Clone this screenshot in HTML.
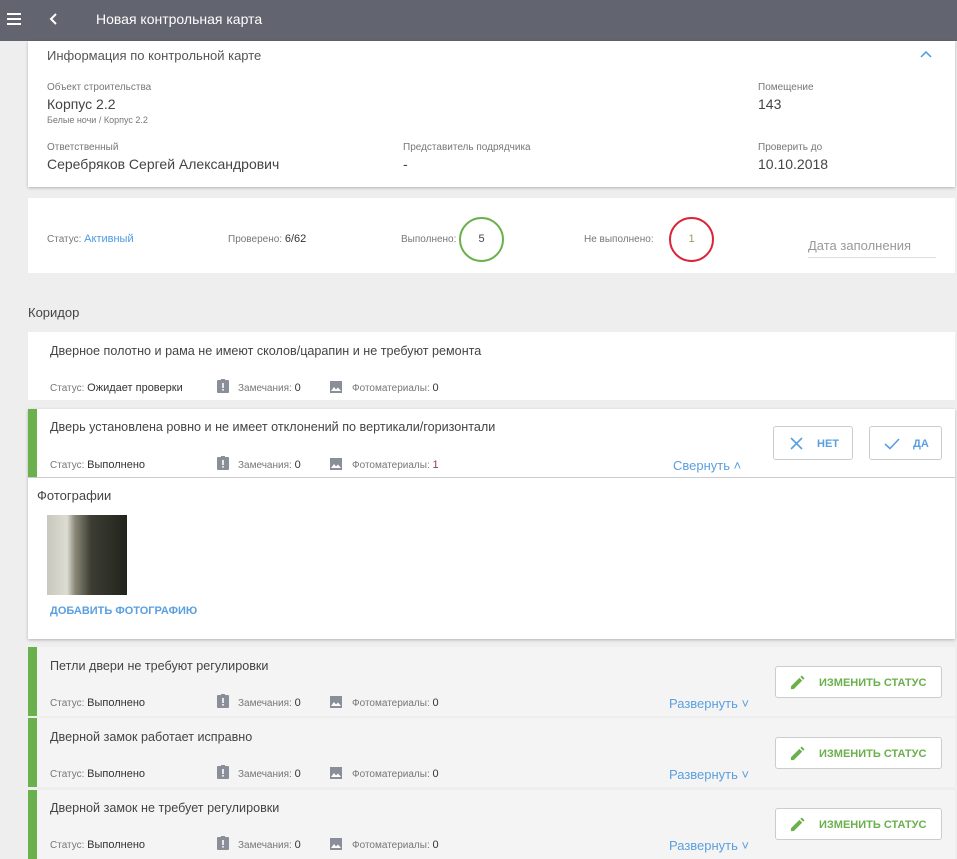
<!DOCTYPE html><html><head><meta charset="utf-8"><style>
*{margin:0;padding:0;box-sizing:border-box}
body{width:957px;height:858px;overflow:hidden;background:#eeeeee;font-family:"Liberation Sans",sans-serif;color:#444;position:relative}
.a{position:absolute;white-space:nowrap}
.hdr{position:absolute;left:0;top:0;width:957px;height:41px;background:#62646f}
.card{position:absolute;left:28px;width:927px;background:#fff;box-shadow:0 1px 3px rgba(0,0,0,.25)}
.lbl{font-size:10px;color:#777}
.val{font-size:14px;color:#444}
.bar{position:absolute;left:0;top:0;bottom:0;width:9px;background:#6ab04c}
.gr{background:#f4f4f4}
.s{font-size:10px;color:#777}
.v{font-size:11px;color:#333}
.t{font-size:12.6px}
.btn{position:absolute;border:1px solid #ccc;border-radius:3px;background:#fff;font-size:11px;font-weight:bold}
</style></head><body>
<div class="hdr">
<div class="a" style="left:7px;top:13px;width:14px;height:2px;background:#fff;box-shadow:0 5px 0 #fff,0 10px 0 #fff"></div>
<svg class="a" style="left:48px;top:12px" width="12" height="14"><path d="M8 2 L3 7 L8 12" stroke="#fff" stroke-width="2" fill="none"/></svg>
<div class="a" style="left:96px;top:11px;font-size:14px;color:#fff">Новая контрольная карта</div>
</div>
<div class="card" style="top:41px;height:146px">
<div class="a" style="left:19px;top:7px;font-size:13px;color:#555">Информация по контрольной карте</div>
<svg class="a" style="left:892px;top:10px" width="12" height="8"><path d="M1 6 L6 1 L11 6" stroke="#4a9be0" stroke-width="1.5" fill="none"/></svg>
<div class="a lbl" style="left:19px;top:41px">Объект строительства</div>
<div class="a val" style="left:19px;top:55px">Корпус 2.2</div>
<div class="a lbl" style="left:19px;top:74px;font-size:9px">Белые ночи / Корпус 2.2</div>
<div class="a lbl" style="left:19px;top:101px">Ответственный</div>
<div class="a val" style="left:19px;top:115px">Серебряков Сергей Александрович</div>
<div class="a lbl" style="left:375px;top:101px">Представитель подрядчика</div>
<div class="a val" style="left:375px;top:115px">-</div>
<div class="a lbl" style="left:730px;top:41px">Помещение</div>
<div class="a val" style="left:730px;top:55px">143</div>
<div class="a lbl" style="left:730px;top:101px">Проверить до</div>
<div class="a val" style="left:730px;top:115px">10.10.2018</div>
</div>
<div class="card" style="top:198px;height:75px;box-shadow:none">
<div class="a s" style="left:19px;top:35px">Статус: <span style="color:#4a9be0;font-size:11px">Активный</span></div>
<div class="a s" style="left:200px;top:35px">Проверено: <span class="v">6/62</span></div>
<div class="a s" style="left:373px;top:36px">Выполнено:</div>
<div class="a" style="left:431px;top:19px;width:45px;height:45px;border:2px solid #6ab04c;border-radius:50%;text-align:center;line-height:41px;font-size:11px">5</div>
<div class="a s" style="left:556px;top:36px">Не выполнено:</div>
<div class="a" style="left:641px;top:19px;width:45px;height:45px;border:2px solid #d9243a;border-radius:50%;text-align:center;line-height:41px;font-size:11px;color:#8a5">1</div>
<div class="a" style="left:780px;top:40px;font-size:13px;color:#999">Дата заполнения</div>
<div class="a" style="left:780px;top:59px;width:128px;height:1px;background:#ddd"></div>
</div>
<div class="a" style="left:28px;top:305px;font-size:13px;color:#444">Коридор</div>

<svg width="0" height="0" style="position:absolute"><defs>
<symbol id="clip" viewBox="0 0 12 14"><rect x="0" y="1" width="12" height="13" rx="1" fill="#8a8e99"/><rect x="4" y="0" width="4" height="2" fill="#8a8e99"/><rect x="5.2" y="4" width="1.6" height="5" fill="#fff"/><rect x="5.2" y="10" width="1.6" height="1.6" fill="#fff"/></symbol>
<symbol id="img" viewBox="0 0 12 12"><rect width="12" height="12" fill="#8a8e99"/><path d="M1 10 L4 6 L6 8.5 L8 6.5 L11 10 Z" fill="#fff"/></symbol>
<symbol id="pen" viewBox="0 0 16 16"><path d="M1 15 L1 12 L10 3 L13 6 L4 15 Z M11 2 L12.5 0.5 L15.5 3.5 L14 5 Z" fill="#6ab04c"/></symbol>
</defs></svg>

<div class="card" style="top:332px;height:68px;box-shadow:none">
<div class="a t" style="left:22px;top:12px">Дверное полотно и рама не имеют сколов/царапин и не требуют ремонта</div>
<div class="a s" style="left:22px;top:50px">Статус: <span class="v">Ожидает проверки</span></div>
<svg class="a" style="left:189px;top:47px" width="12" height="14"><use href="#clip"/></svg>
<div class="a s" style="left:210px;top:50px">Замечания: <span class="v">0</span></div>
<svg class="a" style="left:302px;top:49px" width="12" height="12"><use href="#img"/></svg>
<div class="a s" style="left:324px;top:50px">Фотоматериалы: <span class="v">0</span></div>
</div>

<div class="card" style="top:409px;height:230px">
<div class="bar" style="height:68px"></div>
<div class="a t" style="left:22px;top:11px">Дверь установлена ровно и не имеет отклонений по вертикали/горизонтали</div>
<div class="a s" style="left:22px;top:50px">Статус: <span class="v">Выполнено</span></div>
<svg class="a" style="left:189px;top:47px" width="12" height="14"><use href="#clip"/></svg>
<div class="a s" style="left:210px;top:50px">Замечания: <span class="v">0</span></div>
<svg class="a" style="left:302px;top:49px" width="12" height="12"><use href="#img"/></svg>
<div class="a s" style="left:324px;top:50px">Фотоматериалы: <span class="v" style="color:#8a3b6b">1</span></div>
<div class="a" style="left:645px;top:49px;font-size:13px;color:#5a9fe0">Свернуть ˄</div>
<div class="btn" style="left:745px;top:17px;width:80px;height:34px;color:#5a9fe0"><svg class="a" style="left:16px;top:10px" width="13" height="13"><path d="M1 1 L12 12 M12 1 L1 12" stroke="#5a9fe0" stroke-width="1.6"/></svg><span class="a" style="left:43px;top:11px">НЕТ</span></div>
<div class="btn" style="left:841px;top:17px;width:73px;height:34px;color:#5a9fe0"><svg class="a" style="left:14px;top:10px" width="16" height="13"><path d="M1 7 L6 11.5 L15 2" stroke="#5a9fe0" stroke-width="1.6" fill="none"/></svg><span class="a" style="left:43px;top:11px">ДА</span></div>
<div class="a" style="left:0;top:68px;width:927px;height:1px;background:#ccc"></div>
<div class="a" style="left:9px;top:79px;font-size:13px">Фотографии</div>
<div class="a" style="left:19px;top:106px;width:80px;height:80px;background:linear-gradient(90deg,#c8c8bd 0%,#dcdcd2 25%,#8a8878 35%,#3c3d33 55%,#22241c 100%)"></div>
<div class="a" style="left:22px;top:196px;font-size:11px;font-weight:bold;color:#5a9fe0">ДОБАВИТЬ ФОТОГРАФИЮ</div>
</div>

<div class="card gr" style="top:647px;height:69px;box-shadow:none">
<div class="bar"></div>
<div class="a t" style="left:22px;top:12px">Петли двери не требуют регулировки</div>
<div class="a s" style="left:22px;top:50px">Статус: <span class="v">Выполнено</span></div>
<svg class="a" style="left:189px;top:47px" width="12" height="14"><use href="#clip"/></svg>
<div class="a s" style="left:210px;top:50px">Замечания: <span class="v">0</span></div>
<svg class="a" style="left:302px;top:49px" width="12" height="12"><use href="#img"/></svg>
<div class="a s" style="left:324px;top:50px">Фотоматериалы: <span class="v">0</span></div>
<div class="a" style="left:641px;top:49px;font-size:13px;color:#5a9fe0">Развернуть ˅</div>
<div class="btn" style="left:747px;top:19px;width:167px;height:32px;color:#6ab04c"><svg class="a" style="left:14px;top:8px" width="15" height="15"><use href="#pen"/></svg><span class="a" style="left:43px;top:10px">ИЗМЕНИТЬ СТАТУС</span></div>
</div>
<div class="card gr" style="top:718px;height:69px;box-shadow:none">
<div class="bar"></div>
<div class="a t" style="left:22px;top:12px">Дверной замок работает исправно</div>
<div class="a s" style="left:22px;top:50px">Статус: <span class="v">Выполнено</span></div>
<svg class="a" style="left:189px;top:47px" width="12" height="14"><use href="#clip"/></svg>
<div class="a s" style="left:210px;top:50px">Замечания: <span class="v">0</span></div>
<svg class="a" style="left:302px;top:49px" width="12" height="12"><use href="#img"/></svg>
<div class="a s" style="left:324px;top:50px">Фотоматериалы: <span class="v">0</span></div>
<div class="a" style="left:641px;top:49px;font-size:13px;color:#5a9fe0">Развернуть ˅</div>
<div class="btn" style="left:747px;top:19px;width:167px;height:32px;color:#6ab04c"><svg class="a" style="left:14px;top:8px" width="15" height="15"><use href="#pen"/></svg><span class="a" style="left:43px;top:10px">ИЗМЕНИТЬ СТАТУС</span></div>
</div>
<div class="card gr" style="top:790px;height:69px;box-shadow:none">
<div class="bar"></div>
<div class="a t" style="left:22px;top:11px">Дверной замок не требует регулировки</div>
<div class="a s" style="left:22px;top:49px">Статус: <span class="v">Выполнено</span></div>
<svg class="a" style="left:189px;top:46px" width="12" height="14"><use href="#clip"/></svg>
<div class="a s" style="left:210px;top:49px">Замечания: <span class="v">0</span></div>
<svg class="a" style="left:302px;top:48px" width="12" height="12"><use href="#img"/></svg>
<div class="a s" style="left:324px;top:49px">Фотоматериалы: <span class="v">0</span></div>
<div class="a" style="left:641px;top:48px;font-size:13px;color:#5a9fe0">Развернуть ˅</div>
<div class="btn" style="left:747px;top:18px;width:167px;height:32px;color:#6ab04c"><svg class="a" style="left:14px;top:8px" width="15" height="15"><use href="#pen"/></svg><span class="a" style="left:43px;top:10px">ИЗМЕНИТЬ СТАТУС</span></div>
</div>
</body></html>
